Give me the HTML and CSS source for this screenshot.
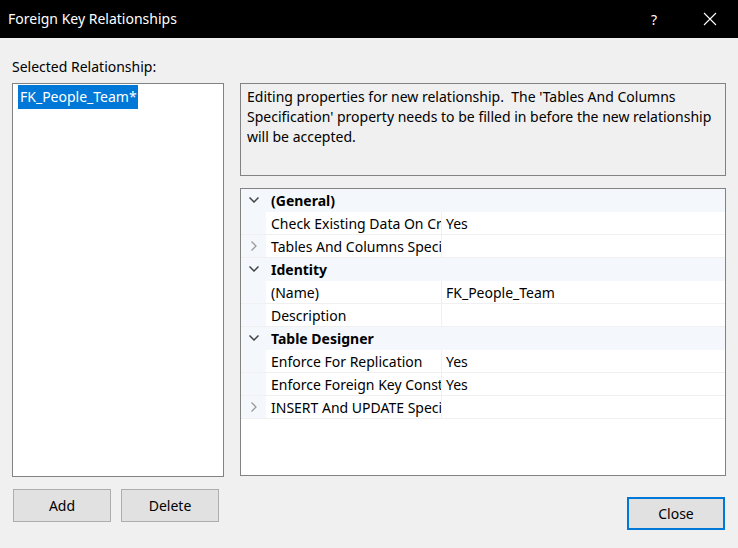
FILE: index.html
```html
<!DOCTYPE html>
<html>
<head>
<meta charset="utf-8">
<link rel="stylesheet" href="styles.css">
</head>
<body>
<div class="dialog">
  <div class="titlebar">
    <span class="title">Foreign Key Relationships</span>
    <span class="help">?</span>
    <span class="close-x">
      <svg width="14" height="14" viewBox="0 0 14 14"><path d="M1 1 L13 13 M13 1 L1 13" stroke="#fff" stroke-width="1.1" fill="none"/></svg>
    </span>
  </div>
  <div class="main">
    <div class="left">
      <div class="label">Selected Relationship:</div>
      <div class="listbox">
        <span class="sel">FK_People_Team*</span>
      </div>
      <div class="btnrow">
        <button class="btn">Add</button>
        <button class="btn">Delete</button>
      </div>
    </div>
    <div class="right">
      <div class="desc">Editing properties for new relationship.&nbsp; The 'Tables And Columns Specification' property needs to be filled in before the new relationship will be accepted.</div>
      <div class="grid">
        <div class="row cat">
          <span class="gut"><svg width="10" height="6" viewBox="0 0 10 6"><path d="M0.5 0.5 L5 5 L9.5 0.5" stroke="#444" stroke-width="1.5" fill="none"/></svg></span>
          <span class="catname">(General)</span>
        </div>
        <div class="row">
          <span class="gut"></span>
          <span class="name">Check Existing Data On Creation Or Re-Enabling</span>
          <span class="val">Yes</span>
        </div>
        <div class="row">
          <span class="gut"><svg width="6" height="10" viewBox="0 0 6 10"><path d="M0.5 0.5 L5 5 L0.5 9.5" stroke="#999" stroke-width="1.3" fill="none"/></svg></span>
          <span class="name">Tables And Columns Specification</span>
          <span class="val"></span>
        </div>
        <div class="row cat">
          <span class="gut"><svg width="10" height="6" viewBox="0 0 10 6"><path d="M0.5 0.5 L5 5 L9.5 0.5" stroke="#444" stroke-width="1.5" fill="none"/></svg></span>
          <span class="catname">Identity</span>
        </div>
        <div class="row">
          <span class="gut"></span>
          <span class="name">(Name)</span>
          <span class="val">FK_People_Team</span>
        </div>
        <div class="row">
          <span class="gut"></span>
          <span class="name">Description</span>
          <span class="val"></span>
        </div>
        <div class="row cat">
          <span class="gut"><svg width="10" height="6" viewBox="0 0 10 6"><path d="M0.5 0.5 L5 5 L9.5 0.5" stroke="#444" stroke-width="1.5" fill="none"/></svg></span>
          <span class="catname">Table Designer</span>
        </div>
        <div class="row">
          <span class="gut"></span>
          <span class="name">Enforce For Replication</span>
          <span class="val">Yes</span>
        </div>
        <div class="row">
          <span class="gut"></span>
          <span class="name">Enforce Foreign Key Constraint</span>
          <span class="val">Yes</span>
        </div>
        <div class="row">
          <span class="gut"><svg width="6" height="10" viewBox="0 0 6 10"><path d="M0.5 0.5 L5 5 L0.5 9.5" stroke="#999" stroke-width="1.3" fill="none"/></svg></span>
          <span class="name">INSERT And UPDATE Specification</span>
          <span class="val"></span>
        </div>
      </div>
      <div class="closerow">
        <button class="btn primary">Close</button>
      </div>
    </div>
  </div>
</div>
</body>
</html>
```
FILE: styles.css
```css
* { box-sizing: border-box; }
html, body {
  margin: 0;
  padding: 0;
  background: #f0f0f0;
}
body {
  font-family: "Segoe UI", "Noto Sans", "Open Sans", sans-serif;
  font-size: 14px;
  color: #000;
}
.dialog {
  width: 738px;
  height: 548px;
  background: #f0f0f0;
}
.titlebar {
  height: 38px;
  background: #000;
  color: #fff;
  display: flex;
  align-items: center;
  padding-left: 8px;
}
.title {
  flex: 1;
  font-size: 14px;
  padding-bottom: 1px;
}
.help {
  width: 30px;
  margin-right: 27px;
  text-align: center;
  font-size: 14px;
}
.close-x {
  width: 28px;
  margin-right: 14px;
  display: flex;
  justify-content: center;
}
.main {
  display: flex;
  padding: 19px 12px 0 12px;
  gap: 16px;
}
.left {
  width: 212px;
  display: flex;
  flex-direction: column;
}
.label {
  height: 20px;
  line-height: 20px;
  margin-bottom: 6px;
}
.listbox {
  height: 394px;
  background: #fff;
  border: 1px solid #828282;
  padding: 1px 0 0 5px;
}
.sel {
  display: inline-block;
  background: #0078d7;
  color: #fff;
  line-height: 24px;
  padding: 0 1px 0 2px;
}
.btnrow {
  display: flex;
  gap: 10px;
  margin-top: 12px;
  padding-left: 1px;
}
.btn {
  font-family: inherit;
  font-size: 14px;
  color: #000;
  width: 98px;
  height: 33px;
  background: #e1e1e1;
  border: 1px solid #adadad;
  padding: 0;
  margin: 0;
}
.btn.primary {
  border: 2px solid #0078d7;
}
.right {
  width: 486px;
  padding-top: 26px;
  display: flex;
  flex-direction: column;
}
.desc {
  height: 93px;
  border: 1px solid #828282;
  background: #f0f0f0;
  padding: 3px 6px 0 6px;
  line-height: 20px;
}
.grid {
  margin-top: 12px;
  height: 288px;
  background: #fff;
  border: 1px solid #828282;
}
.row {
  display: flex;
  height: 23px;
  line-height: 20px;
  border-bottom: 1px solid #f0f0f0;
}
.row.cat {
  background: #f4f7fb;
  border-bottom-color: #f4f7fb;
}
.gut {
  width: 25px;
  flex: none;
  background: #f4f7fb;
  display: flex;
  align-items: center;
  justify-content: center;
  padding-left: 1px;
}
.catname {
  padding: 2px 0 0 5px;
  font-weight: bold;
}
.name {
  width: 176px;
  flex: none;
  padding: 2px 0 0 5px;
  white-space: nowrap;
  overflow: hidden;
  border-right: 1px solid #f0f0f0;
}
.val {
  flex: 1;
  padding: 2px 0 0 4px;
  white-space: nowrap;
}
.closerow {
  display: flex;
  justify-content: flex-end;
  margin-top: 21px;
  padding-right: 1px;
}
```
